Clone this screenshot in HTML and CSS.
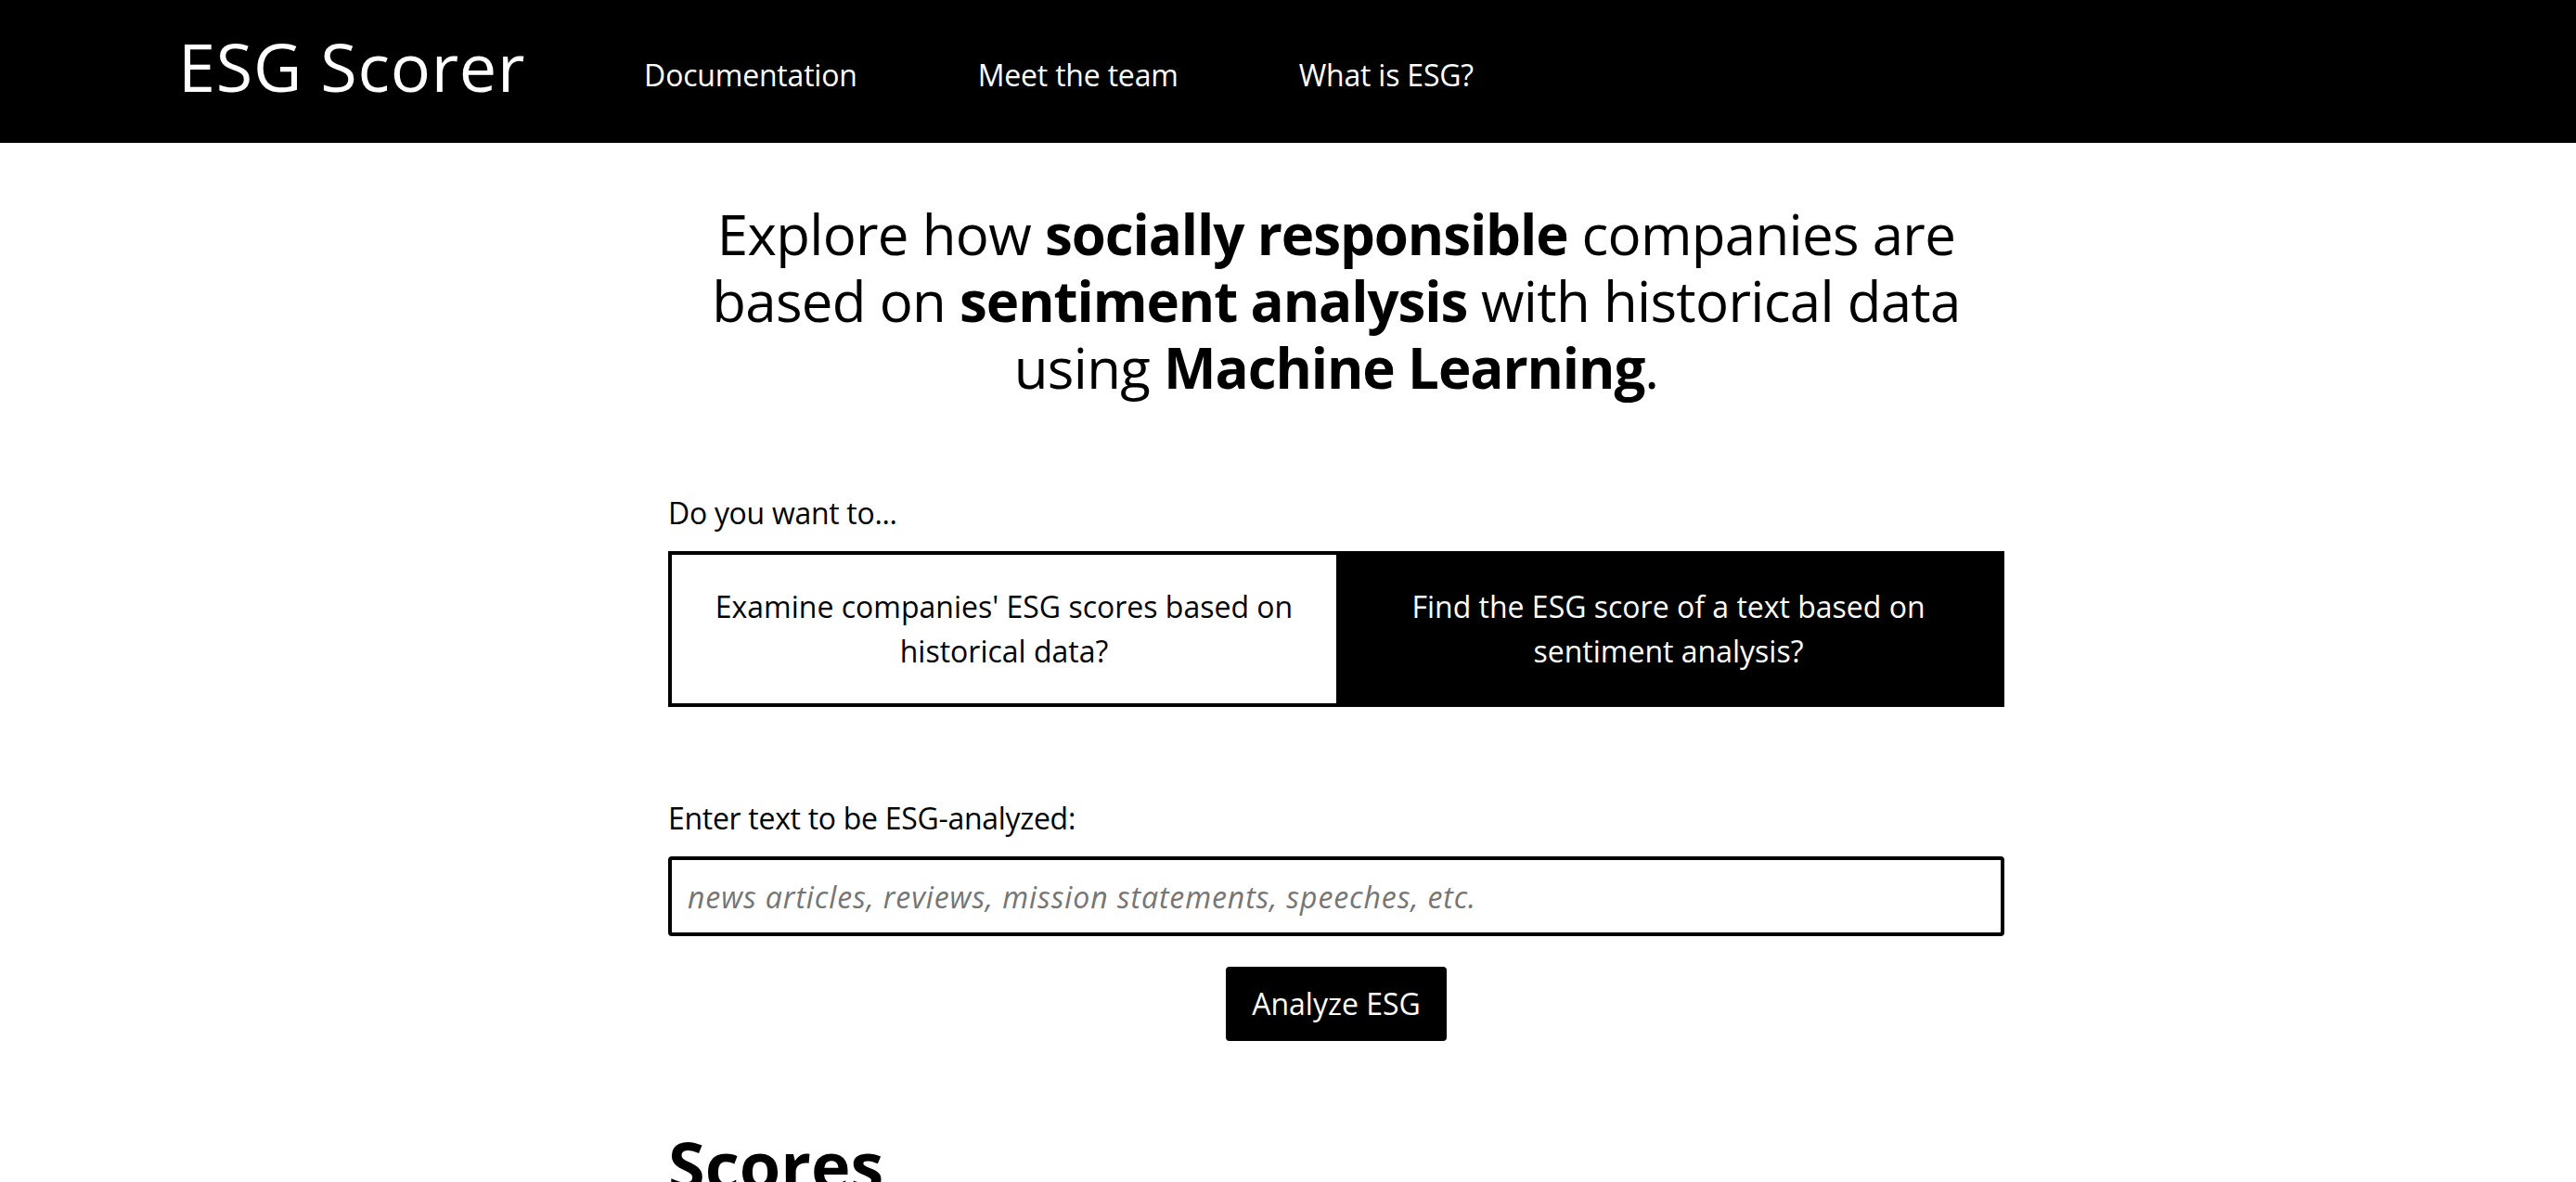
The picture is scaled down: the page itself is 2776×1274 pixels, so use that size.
FILE: index.html
```html
<!DOCTYPE html>
<html lang="en">
<head>
<meta charset="utf-8">
<title>ESG Scorer</title>
<link rel="stylesheet" href="styles.css">
</head>
<body>
<header class="topbar">
  <a class="brand" href="#">ESG Scorer</a>
  <nav class="nav">
    <a href="#">Documentation</a>
    <a href="#">Meet the team</a>
    <a href="#">What is ESG?</a>
  </nav>
</header>
<main class="page">
  <h1 class="intro">Explore how <strong>socially responsible</strong> companies are<br>based on <strong>sentiment analysis</strong> with historical data<br>using <strong>Machine Learning</strong>.</h1>
  <section class="choice">
    <p class="label">Do you want to...</p>
    <div class="toggle">
      <button class="opt">Examine companies' ESG scores based on historical data?</button>
      <button class="opt active">Find the ESG score of a text based on sentiment analysis?</button>
    </div>
  </section>
  <section class="analyze">
    <label class="label" for="txt">Enter text to be ESG-analyzed:</label>
    <input id="txt" class="text-input" type="text" placeholder="news articles, reviews, mission statements, speeches, etc.">
    <div class="actions"><button class="btn">Analyze ESG</button></div>
  </section>
  <h2 class="scores">Scores</h2>
</main>
</body>
</html>
```

FILE: styles.css
```css
* { box-sizing: border-box; }
html, body { margin: 0; padding: 0; }
body {
  font-family: "Open Sans", Lato, sans-serif;
  color: #000;
  background: #fff;
  overflow: hidden;
}
.topbar {
  height: 154px;
  background: #000;
  display: flex;
  align-items: flex-start;
  padding-left: 192px;
  gap: 128px;
}
.brand {
  color: #fff;
  text-decoration: none;
  font-size: 72px;
  line-height: 72px;
  letter-spacing: 0.7px;
  margin-top: 35px;
}
.nav {
  display: flex;
  gap: 130px;
  margin-top: 57px;
}
.nav a {
  color: #fff;
  text-decoration: none;
  font-size: 32px;
  line-height: 48px;
  letter-spacing: -0.2px;
}
.page {
  width: 1440px;
  margin-left: 720px;
}
.intro {
  margin: 62px 0 0;
  font-size: 60px;
  line-height: 72px;
  font-weight: 400;
  letter-spacing: -0.7px;
  text-align: center;
}
.intro strong { font-weight: 700; letter-spacing: -1.1px; }
.choice { margin-top: 97px; }
.label {
  display: block;
  margin: 0 0 17px;
  font-size: 32px;
  line-height: 48px;
  letter-spacing: -0.3px;
}
.toggle {
  display: flex;
  border: 4px solid #000;
}
.opt {
  flex: 1;
  font: inherit;
  font-size: 32px;
  line-height: 48px;
  padding: 32px;
  border: 0;
  background: #fff;
  color: #000;
  text-align: center;
}
.opt.active { background: #000; color: #fff; }
.analyze { margin-top: 96px; }
.text-input {
  display: block;
  width: 100%;
  height: 86px;
  border: 4px solid #000;
  border-radius: 4px;
  padding: 0 17px;
  font: inherit;
  font-size: 32px;
  outline: none;
}
.text-input::placeholder {
  color: #757575;
  font-style: italic;
  letter-spacing: 0.9px;
}
.actions {
  display: flex;
  justify-content: center;
  margin-top: 33px;
}
.btn {
  font: inherit;
  font-size: 32px;
  line-height: 48px;
  padding: 16px 28px;
  background: #000;
  color: #fff;
  border: 0;
  border-radius: 4px;
}
.scores {
  margin: 84px 0 0;
  font-size: 72px;
  line-height: normal;
  font-weight: 700;
}
```
